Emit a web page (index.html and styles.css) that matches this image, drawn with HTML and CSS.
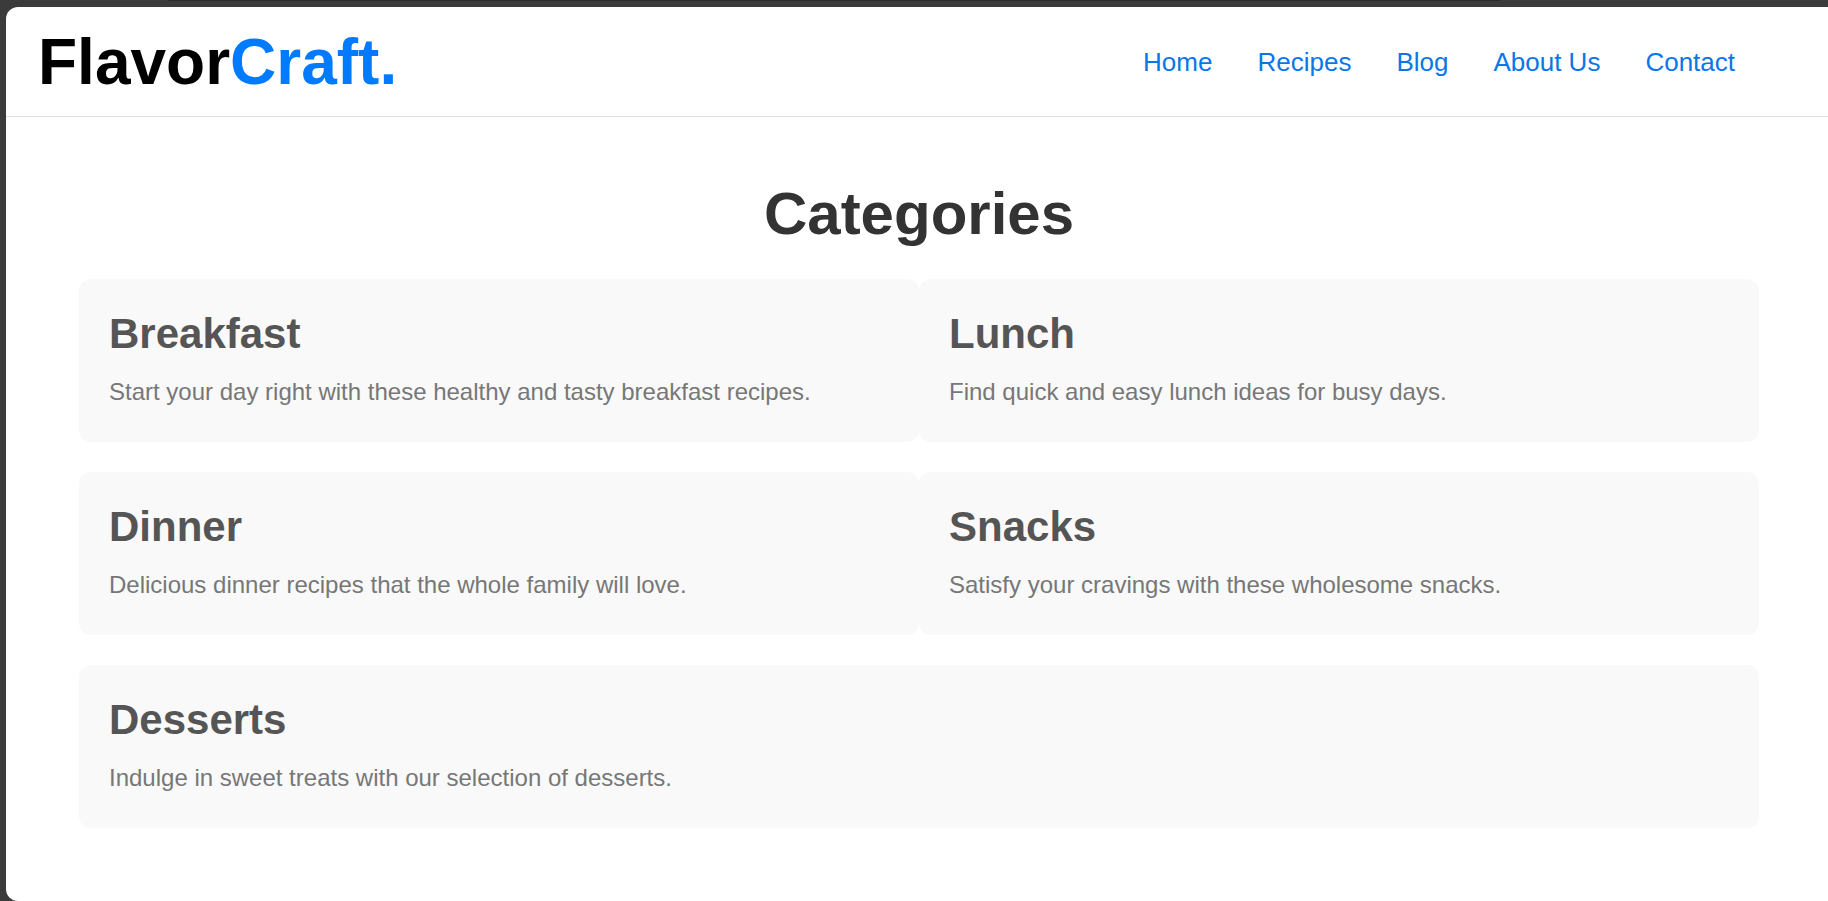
FILE: index.html
```html
<!DOCTYPE html>
<html lang="en">
<head>
  <meta charset="utf-8">
  <title>FlavorCraft.</title>
  <link rel="stylesheet" href="styles.css">
</head>
<body class="frame">
  <div class="frame-edge"></div>
  <div class="page">
    <header class="site-header">
      <h1 class="logo">Flavor<span class="logo-accent">Craft.</span></h1>
      <nav class="site-nav" aria-label="Main">
        <a class="nav-link" href="#home">Home</a>
        <a class="nav-link" href="#recipes">Recipes</a>
        <a class="nav-link" href="#blog">Blog</a>
        <a class="nav-link" href="#about">About Us</a>
        <a class="nav-link" href="#contact">Contact</a>
      </nav>
    </header>
    <main class="categories">
      <h2 class="section-title">Categories</h2>
      <div class="card-list">
        <article class="card">
          <h3 class="card-title">Breakfast</h3>
          <p class="card-text">Start your day right with these healthy and tasty breakfast recipes.</p>
        </article>
        <article class="card">
          <h3 class="card-title">Lunch</h3>
          <p class="card-text">Find quick and easy lunch ideas for busy days.</p>
        </article>
        <article class="card">
          <h3 class="card-title">Dinner</h3>
          <p class="card-text">Delicious dinner recipes that the whole family will love.</p>
        </article>
        <article class="card">
          <h3 class="card-title">Snacks</h3>
          <p class="card-text">Satisfy your cravings with these wholesome snacks.</p>
        </article>
        <article class="card">
          <h3 class="card-title">Desserts</h3>
          <p class="card-text">Indulge in sweet treats with our selection of desserts.</p>
        </article>
      </div>
    </main>
  </div>
</body>
</html>
```

FILE: styles.css
```css
* {
  box-sizing: border-box;
}

.frame {
  display: flex;
  flex-direction: column;
  min-height: 100vh;
  margin: 0;
  padding-left: 6px;
  background: #3b3b3b;
  font-family: "Liberation Sans", Arial, sans-serif;
}

.frame-edge {
  height: 7px;
  margin: 0 328px 0 162px;
  border-top: 1px solid #2b2b2b;
}

.page {
  flex: 1;
  background: #fff;
  border-radius: 12px 0 0 12px;
}

.site-header {
  display: flex;
  align-items: center;
  justify-content: space-between;
  padding: 17px 93px 16px 32px;
  border-bottom: 1px solid #ddd;
}

.logo {
  margin: 0;
  font-size: 64px;
  line-height: 76px;
  color: #000;
}

.logo-accent {
  color: #007bff;
}

.site-nav {
  display: flex;
  gap: 45px;
}

.nav-link {
  font-size: 26px;
  line-height: 30px;
  color: #0a76e8;
  text-decoration: none;
}

.categories {
  padding: 62px 69px 62px 73px;
}

.section-title {
  margin: 0 0 30px;
  font-size: 60px;
  line-height: 70px;
  text-align: center;
  color: #333;
}

.card-list {
  display: flex;
  flex-wrap: wrap;
  row-gap: 30px;
}

.card {
  flex: 1 0 50%;
  padding: 30px;
  border-radius: 12px;
  background: #f9f9f9;
}

.card-title {
  margin: 0 0 13px;
  font-size: 42px;
  line-height: 50px;
  color: #555;
}

.card-text {
  margin: 0;
  font-size: 24px;
  line-height: 40px;
  color: #777;
}
```
